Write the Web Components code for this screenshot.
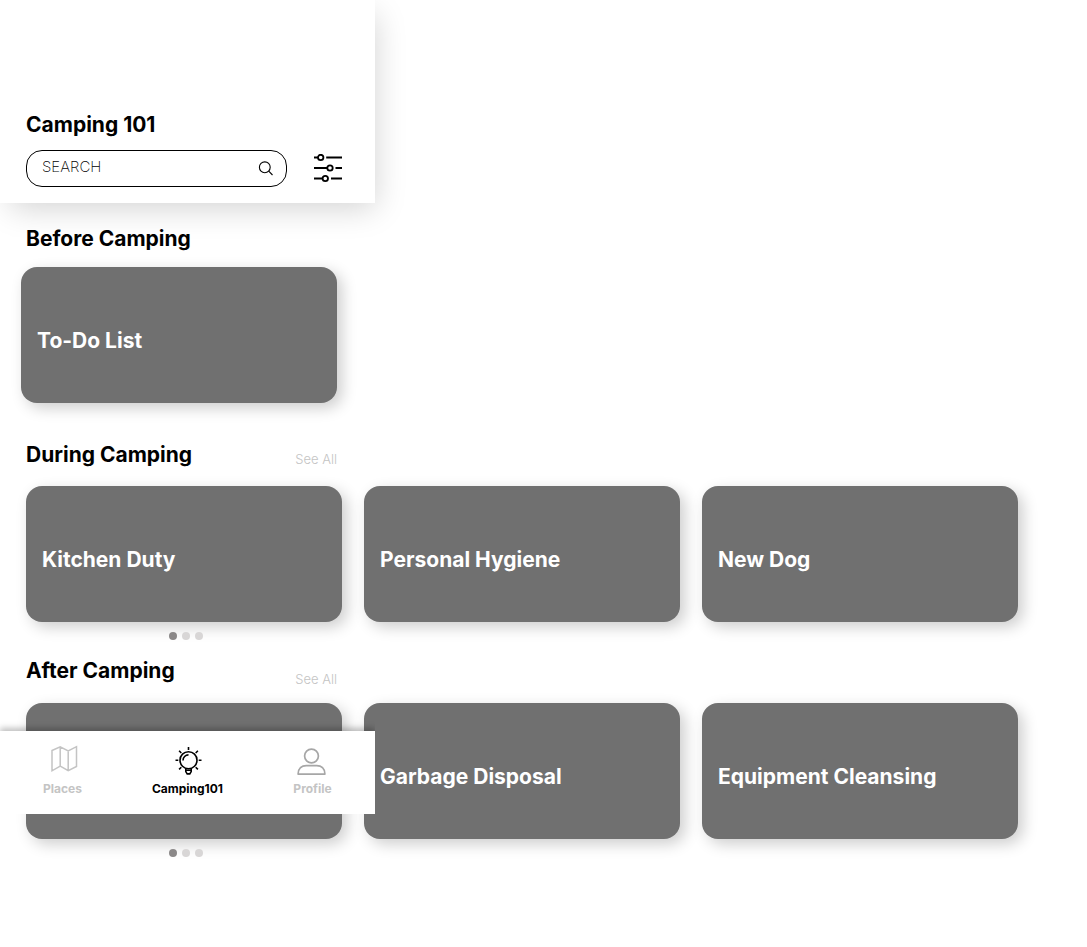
<!DOCTYPE html>
<html lang="en">
<head>
<meta charset="utf-8">
<meta name="viewport" content="width=device-width, initial-scale=1">
<title>Camping 101</title>
<style>
  body { margin: 0; background: #fff; color: #000; font-family: Inter, "Liberation Sans", sans-serif; }
</style>
</head>
<body>
<camping-app></camping-app>

<template id="t-app">
  <style>
    :host { display: block; position: relative; padding-bottom: 24px; }
    main { display: block; padding: 24px 21px 0; }
    bottom-nav { position: absolute; left: 0; top: 731px; }
    .before { --head-gap: 16px; --row-inset: 0; margin-bottom: 40px; }
    .during { margin-bottom: 19px; }
    .after { --head-gap: 16px; --head-height: 28px; }
  </style>
  <app-header heading="Camping 101"></app-header>
  <main>
    <card-section class="before" heading="Before Camping">
      <topic-card>To-Do List</topic-card>
    </card-section>
    <card-section class="during" heading="During Camping" pages="3">
      <topic-card>Kitchen Duty</topic-card>
      <topic-card>Personal Hygiene</topic-card>
      <topic-card>New Dog</topic-card>
    </card-section>
    <card-section class="after" heading="After Camping" pages="3">
      <topic-card></topic-card>
      <topic-card>Garbage Disposal</topic-card>
      <topic-card>Equipment Cleansing</topic-card>
    </card-section>
  </main>
  <bottom-nav>
    <nav-item label="Places">
      <svg width="30" height="30" viewBox="0 0 30 30" fill="none" stroke="#c4c4c4" stroke-width="1.5" stroke-linejoin="miter"><path d="M4 5.500 12.200 1.800 20.200 5.800 28.500 1.600V21.500L20.200 25.600 12.200 21.200 4 25.800ZM12.200 1.800V21.200M20.200 5.800V25.600"/></svg>
    </nav-item>
    <nav-item label="Camping101" active>
      <svg width="30" height="30" viewBox="0 0 30 30" fill="none" stroke="#000" stroke-width="1.6"><circle cx="15.500" cy="15.200" r="8.500"/><path d="M10 15.500A5.500 5.500 0 0 1 15.500 9.900M15.500 2V5M2.500 15.200H5.300M25.700 15.200H28.500M6.100 5.800 8.300 8M24.900 5.800 22.700 8M6.100 24.400 8.300 22.200M24.900 24.400 22.700 22.200M12.800 23.200V26.600L14.200 28.900H16.800L18.200 26.600V23.200M12.800 25.200H18.200"/></svg>
    </nav-item>
    <nav-item label="Profile">
      <svg width="30" height="30" viewBox="0 0 30 30" fill="none" stroke="#a6a6a6" stroke-width="1.7" stroke-linejoin="round"><circle cx="13.500" cy="11" r="6.900"/><path d="M.1 29.100C.1 23.200 3.800 20.600 8.300 20.600H18.700C23.200 20.600 26.900 23.200 26.900 29.100Z"/></svg>
    </nav-item>
  </bottom-nav>
</template>

<template id="t-header">
  <style>
    :host { display: block; box-sizing: border-box; width: 100%; max-width: 375px; padding: 113px 33px 16px 26px;
      background: #fff; box-shadow: 5px 10px 30px -5px rgba(0,0,0,.18); }
    h1 { margin: 0 0 13px; font-size: 21px; line-height: 24px; font-weight: 700; }
    form { display: flex; align-items: center; gap: 27px; }
    .box { flex: 1; min-width: 0; box-sizing: border-box; display: flex; align-items: center; height: 37px;
      padding: 0 13px 0 15px; border: 1px solid #000; border-radius: 16px; }
    input { flex: 1; min-width: 0; padding: 0 0 4px; border: 0; outline: 0; background: none; color: #000;
      font: 200 15px/20px Inter, sans-serif; }
    input::placeholder { color: #000; opacity: 1; }
    button { display: block; padding: 0; border: 0; background: none; }
    svg { display: block; }
  </style>
  <h1></h1>
  <form>
    <div class="box">
      <input type="text" placeholder="SEARCH" aria-label="Search">
      <button type="button" aria-label="Search"><svg width="15" height="15" viewBox="0 0 15 15" fill="none" stroke="#000" stroke-width="1.1"><circle cx="6.8" cy="6.300" r="5.400"/><path d="M10.700 10.200 14.500 14"/></svg></button>
    </div>
    <button type="button" aria-label="Filter"><svg width="28" height="30" viewBox="0 0 28 30" fill="none" stroke="#000" stroke-width="1.8"><path d="M0 3.500H4M12.200 3.500H28M0 14H13M21.500 14H28M0 24.500H8.500M17 24.500H28"/><circle cx="6.700" cy="3.500" r="2.700"/><circle cx="16" cy="14" r="2.700"/><circle cx="11.300" cy="24.500" r="2.700"/></svg></button>
  </form>
</template>

<template id="t-section">
  <style>
    :host { display: block; }
    header { display: flex; justify-content: space-between; align-items: flex-end; max-width: 311px; padding-left: 5px;
      min-height: var(--head-height, 24px); margin-bottom: var(--head-gap, 19px); }
    h2 { align-self: flex-start; margin: 0; font-size: 21px; line-height: 24px; font-weight: 700; }
    a { color: #c4c4c4; font-size: 13px; line-height: 16px; font-weight: 300; text-decoration: none; }
    .row { display: flex; gap: 22px; padding-left: var(--row-inset, 5px); }
    .dots { display: flex; justify-content: center; gap: 5px; max-width: 320px; padding-left: 5px; margin-top: 10px; }
    i { width: 8px; height: 8px; border-radius: 50%; background: #d8d6d6; }
    i:first-child { background: #8b8888; }
  </style>
  <header><h2></h2><a href="#all">See All</a></header>
  <div class="row"><slot></slot></div>
  <div class="dots"></div>
</template>

<template id="t-card">
  <style>
    :host { display: flex; align-items: center; box-sizing: border-box; flex: 0 0 316px; height: 136px; padding: 12px 16px 0;
      border-radius: 16px; background: #707070; color: #fff; box-shadow: 5px 5px 15px rgba(0,0,0,.2); }
    h3 { margin: 0; font-size: 21px; line-height: 24px; font-weight: 700; }
  </style>
  <h3><slot></slot></h3>
</template>

<template id="t-nav">
  <style>
    :host { display: block; width: 100%; max-width: 375px; background: #fff; box-shadow: 0 -3px 6px rgba(0,0,0,.25); clip-path: inset(-12px 0 0 0); }
    nav { display: grid; grid-template-columns: repeat(3, 1fr); padding: 14px 0 17px; }
  </style>
  <nav aria-label="Main"><slot></slot></nav>
</template>

<template id="t-item">
  <style>
    :host { display: block; color: #c4c4c4; }
    :host([active]) { color: #000; }
    a { display: flex; flex-direction: column; align-items: center; gap: 6px; color: inherit; text-decoration: none;
      font-size: 12px; line-height: 16px; font-weight: 700; }
    ::slotted(svg) { display: block; overflow: visible; }
  </style>
  <a href="#"><slot></slot><span></span></a>
</template>

<script>
  class Base extends HTMLElement {
    connectedCallback() {
      if (this.shadowRoot) return;
      const root = this.attachShadow({ mode: 'open' });
      root.append(document.getElementById(this.constructor.template).content.cloneNode(true));
      this.setup(root);
    }
    setup() {}
  }
  class TopicCard extends Base { static template = 't-card'; }
  class BottomNav extends Base { static template = 't-nav'; }
  class NavItem extends Base {
    static template = 't-item';
    setup(root) {
      root.querySelector('span').textContent = this.getAttribute('label');
      if (this.hasAttribute('active')) root.querySelector('a').setAttribute('aria-current', 'page');
    }
  }
  class AppHeader extends Base {
    static template = 't-header';
    setup(root) { root.querySelector('h1').textContent = this.getAttribute('heading'); }
  }
  class CardSection extends Base {
    static template = 't-section';
    setup(root) {
      root.querySelector('h2').textContent = this.getAttribute('heading');
      const pages = Number(this.getAttribute('pages'));
      const dots = root.querySelector('.dots');
      if (!pages) { root.querySelector('a').remove(); dots.remove(); return; }
      for (let n = 0; n < pages; n++) dots.append(document.createElement('i'));
    }
  }
  class CampingApp extends Base { static template = 't-app'; }
  customElements.define('topic-card', TopicCard);
  customElements.define('nav-item', NavItem);
  customElements.define('bottom-nav', BottomNav);
  customElements.define('app-header', AppHeader);
  customElements.define('card-section', CardSection);
  customElements.define('camping-app', CampingApp);
</script>
</body>
</html>
